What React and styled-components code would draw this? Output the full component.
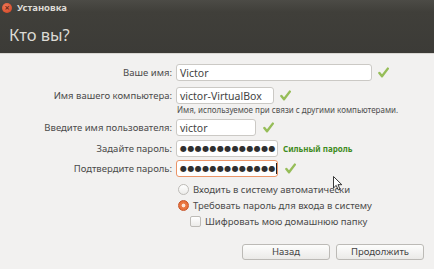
import React from "react";
import styled, { createGlobalStyle } from "styled-components";

const Global = createGlobalStyle`
  html, body { margin: 0; padding: 0; background: #f2f1f0; }
  body { font-family: "Noto Sans", "Open Sans", sans-serif; overflow: hidden; }
`;

const Window = styled.div`
  width: 434px;
  height: 269px;
  position: relative;
  background: #f2f1f0;
  display: flex;
  flex-direction: column;
`;

const Header = styled.div`
  height: 53px;
  background: linear-gradient(#4c4b46 0px, #403f3a 12px, #3c3b37 53px);
  border-bottom: 1px solid #d9d7d3;
  display: flex;
  flex-direction: column;
  padding: 0 0 0 2px;
  box-sizing: content-box;
`;

const TitleBar = styled.div`
  height: 15px;
  display: flex;
  align-items: center;
  gap: 5px;
`;

const Close = styled.span`
  width: 10px;
  height: 10px;
  border-radius: 50%;
  background: radial-gradient(circle at 40% 35%, #f07a5a, #d8502e 70%);
  position: relative;
  &::after {
    content: "×";
    position: absolute;
    left: 0; right: 0; top: -2px;
    text-align: center;
    font-size: 9px;
    color: #6b2a18;
    font-weight: bold;
  }
`;

const TitleText = styled.span`
  color: #dedcd6;
  font-size: 9.5px;
  font-weight: bold;
`;

const Heading = styled.div`
  color: #dcdad4;
  font-size: 16.5px;
  margin: 8px 0 0 7px;
`;

const Form = styled.div`
  display: flex;
  flex-direction: column;
  padding-top: 10px;
`;

const Row = styled.div`
  display: flex;
  align-items: center;
  height: 17px;
  margin-top: ${(p) => p.$mt || 0}px;
`;

const Label = styled.div`
  width: 172px;
  text-align: right;
  font-size: 9.5px;
  color: #4a4a4a;
  margin-right: 4px;
  white-space: nowrap;
`;

const Input = styled.div`
  width: ${(p) => p.$w}px;
  height: 17px;
  box-sizing: border-box;
  background: #fff;
  border: 1px solid ${(p) => (p.$focus ? "#eb9467" : "#cbc9c5")};
  border-radius: 3px;
  display: flex;
  align-items: center;
  padding-left: 3px;
  font-size: 10.5px;
  color: #444;
  white-space: nowrap;
`;

const Dots = styled.span`
  font-size: 8px;
  letter-spacing: 0.4px;
  color: #2f2f2f;
  font-family: "DejaVu Sans", sans-serif;
`;

const Caret = styled.span`
  display: inline-block;
  width: 1px;
  height: 11px;
  background: #222;
`;

const Check = styled.svg`
  width: 11px;
  height: 11px;
  margin-left: ${(p) => p.$ml || 5}px;
`;

const Hint = styled.div`
  margin: 1px 0 0 177px;
  font-size: 8px;
  color: #4e4e4e;
  height: 10px;
  line-height: 10px;
  white-space: nowrap;
`;

const Strong = styled.span`
  margin-left: 5px;
  font-size: 8px;
  font-weight: bold;
  color: #3f8b22;
  white-space: nowrap;
`;

const Option = styled.label`
  display: flex;
  align-items: center;
  height: 14px;
  margin-top: ${(p) => p.$mt || 0}px;
  margin-left: ${(p) => p.$ml}px;
  font-size: 9.5px;
  color: #4a4a4a;
  gap: 4px;
  white-space: nowrap;
`;

const Radio = styled.span`
  width: 11px;
  height: 11px;
  box-sizing: border-box;
  border-radius: 50%;
  border: 1px solid ${(p) => (p.$on ? "#c8562b" : "#bdbbb7")};
  background: ${(p) =>
    p.$on
      ? "radial-gradient(circle, #fbe3d6 0 1.6px, #ec7a45 2.2px, #e0652f 100%)"
      : "linear-gradient(#ffffff, #ecebe9)"};
`;

const Box = styled.span`
  width: 11px;
  height: 11px;
  box-sizing: border-box;
  border-radius: 2px;
  border: 1px solid #bdbbb7;
  background: linear-gradient(#ffffff, #ecebe9);
`;

const Buttons = styled.div`
  display: flex;
  justify-content: flex-end;
  gap: 6px;
  margin-top: 16px;
  padding-right: 10px;
`;

const Button = styled.button`
  width: 88px;
  height: 16px;
  box-sizing: border-box;
  border: 1px solid #bcbab6;
  border-radius: 3px;
  background: linear-gradient(#fdfdfc, #ebeae8);
  font-family: inherit;
  font-size: 9.5px;
  color: #444;
  padding: 0;
  line-height: 14px;
`;

const Cursor = styled.svg`
  position: absolute;
  left: 333px;
  top: 176px;
  width: 10px;
  height: 15px;
`;

const Tick = ({ ml }) => (
  <Check $ml={ml} viewBox="0 0 11 11">
    <path
      d="M1.4 6 L4 9.3 L9.8 1.6"
      fill="none"
      stroke="#96bd58"
      strokeWidth="2.4"
      strokeLinecap="round"
      strokeLinejoin="round"
    />
  </Check>
);

export default function App() {
  return (
    <>
      <Global />
      <Window>
        <Header>
          <TitleBar>
            <Close />
            <TitleText>Установка</TitleText>
          </TitleBar>
          <Heading>Кто вы?</Heading>
        </Header>
        <Form>
          <Row>
            <Label>Ваше имя:</Label>
            <Input $w={196}>Victor</Input>
            <Tick ml={6} />
          </Row>
          <Row $mt={6}>
            <Label>Имя вашего компьютера:</Label>
            <Input $w={98}>victor-VirtualBox</Input>
            <Tick ml={6} />
          </Row>
          <Hint>Имя, используемое при связи с другими компьютерами.</Hint>
          <Row $mt={4}>
            <Label>Введите имя пользователя:</Label>
            <Input $w={80}>victor</Input>
            <Tick ml={7} />
          </Row>
          <Row $mt={4}>
            <Label>Задайте пароль:</Label>
            <Input $w={102}>
              <Dots>●●●●●●●●●●●●●</Dots>
            </Input>
            <Strong>Сильный пароль</Strong>
          </Row>
          <Row $mt={3}>
            <Label>Подтвердите пароль:</Label>
            <Input $w={102} $focus>
              <Dots>●●●●●●●●●●●●●</Dots>
              <Caret />
            </Input>
            <Tick ml={7} />
          </Row>
          <Option $mt={5} $ml={178}>
            <Radio />
            Входить в систему автоматически
          </Option>
          <Option $mt={2} $ml={178}>
            <Radio $on />
            Требовать пароль для входа в систему
          </Option>
          <Option $mt={2} $ml={190}>
            <Box />
            Шифровать мою домашнюю папку
          </Option>
          <Buttons>
            <Button>Назад</Button>
            <Button>Продолжить</Button>
          </Buttons>
        </Form>
        <Cursor viewBox="0 0 10 15">
          <path d="M0.5 0.5 L0.5 12 L3.2 9.4 L5.3 14 L7 13.2 L5 8.7 L8.8 8.7 Z" fill="#fff" stroke="#222" strokeWidth="0.9" strokeLinejoin="round" />
        </Cursor>
      </Window>
    </>
  );
}
